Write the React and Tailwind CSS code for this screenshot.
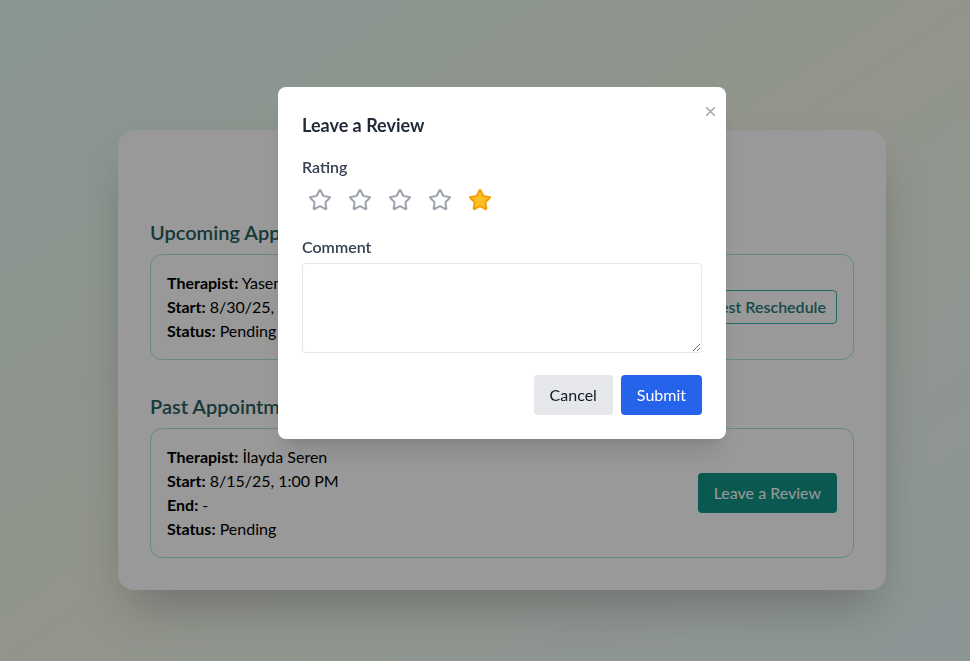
import React from "react";

const font = { fontFamily: '"Lato", "Noto Sans", sans-serif' };

function StarIcon({ filled }) {
  return (
    <svg
      width="24"
      height="24"
      viewBox="0 0 24 24"
      fill={filled ? "#fbbf24" : "none"}
      stroke={filled ? "#f59e0b" : "#9ca3af"}
      strokeWidth="2"
      strokeLinecap="round"
      strokeLinejoin="round"
    >
      <path d="M11.525 2.295a.53.53 0 0 1 .95 0l2.31 4.679a2.123 2.123 0 0 0 1.595 1.16l5.166.756a.53.53 0 0 1 .294.904l-3.736 3.638a2.123 2.123 0 0 0-.611 1.878l.882 5.14a.53.53 0 0 1-.771.56l-4.618-2.428a2.122 2.122 0 0 0-1.973 0L6.396 21.01a.53.53 0 0 1-.77-.56l.881-5.139a2.122 2.122 0 0 0-.611-1.879L2.16 9.795a.53.53 0 0 1 .294-.906l5.165-.755a2.122 2.122 0 0 0 1.597-1.16z" />
    </svg>
  );
}

function Line({ label, value }) {
  return (
    <p className="text-base leading-6 text-black">
      <span className="font-bold">{label}</span> {value}
    </p>
  );
}

export default function App() {
  return (
    <div
      className="relative min-h-screen w-full overflow-hidden bg-gradient-to-br from-[#e4f9f5] via-[#f3f8e8] to-[#eafafa]"
      style={font}
    >
      <div className="pt-[130px] pb-[71px]">
        <div className="ml-[118px] w-[768px] rounded-2xl bg-white p-8 shadow-2xl">
          <h1 className="mb-6 text-center text-2xl font-bold leading-8 text-[#285e61]">
            My Appointments
          </h1>

          <h2 className="mb-2 text-xl font-semibold leading-7 text-[#285e61]">
            Upcoming Appointments
          </h2>
          <div className="flex items-center justify-between rounded-xl border border-[#a7e8da] px-4 py-4">
            <div>
              <Line label="Therapist:" value="Yasemin Kaya" />
              <Line label="Start:" value="8/30/25, 11:00 AM" />
              <Line label="Status:" value="Pending" />
            </div>
            <button className="rounded border border-[#38b2ac] px-2.5 py-1 text-base font-semibold leading-6 text-[#2c7a7b]">
              Request Reschedule
            </button>
          </div>

          <h2 className="mt-8 mb-2 text-xl font-semibold leading-7 text-[#285e61]">
            Past Appointments
          </h2>
          <div className="flex items-center justify-between rounded-xl border border-[#a7e8da] px-4 py-4">
            <div>
              <Line label="Therapist:" value="İlayda Seren" />
              <Line label="Start:" value="8/15/25, 1:00 PM" />
              <Line label="End:" value="-" />
              <Line label="Status:" value="Pending" />
            </div>
            <button className="rounded bg-[#0f9486] px-4 py-2 text-base leading-6 text-white">
              Leave a Review
            </button>
          </div>
        </div>
      </div>

      <div className="fixed inset-0 flex items-start justify-center bg-black/40 pt-[87px] pl-[34px]">
        <div className="relative w-[448px] rounded-lg bg-white p-6 shadow-xl">
          <button className="absolute top-[20px] right-[11px]" aria-label="Close">
            <svg width="9" height="9" viewBox="0 0 9 9" stroke="#9ca3af" strokeWidth="1.4" strokeLinecap="round">
              <line x1="0.7" y1="0.7" x2="8.3" y2="8.3" />
              <line x1="8.3" y1="0.7" x2="0.7" y2="8.3" />
            </svg>
          </button>
          <h3 className="mb-4 text-lg font-bold leading-7 text-[#1f2937]">
            Leave a Review
          </h3>
          <label className="mb-[9px] block text-base font-semibold leading-6 text-[#374151]">
            Rating
          </label>
          <div className="flex gap-1">
            {[1, 2, 3, 4, 5].map((i) => (
              <button key={i} className="px-1.5">
                <StarIcon filled={i === 5} />
              </button>
            ))}
          </div>
          <label className="mt-[23px] mb-1 block text-base font-semibold leading-6 text-[#374151]">
            Comment
          </label>
          <textarea className="block h-[90px] w-full rounded border border-[#e5e7eb] p-2 text-base" />
          <div className="mt-[22px] flex justify-end gap-2">
            <button className="rounded bg-[#e5e7eb] px-4 py-2 text-base leading-6 text-[#111827]">
              Cancel
            </button>
            <button className="rounded bg-[#2563eb] px-4 py-2 text-base leading-6 text-white">
              Submit
            </button>
          </div>
        </div>
      </div>
    </div>
  );
}
